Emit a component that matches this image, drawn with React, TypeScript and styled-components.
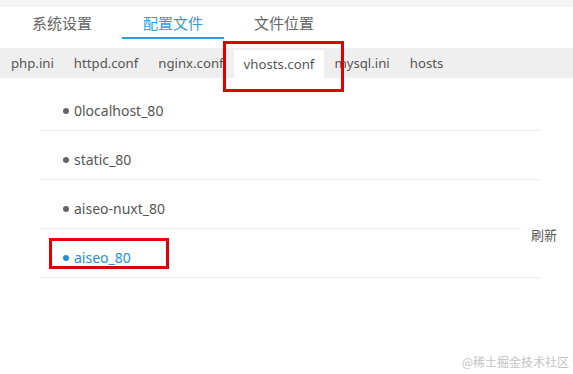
import styled, { createGlobalStyle } from 'styled-components';

const GlobalStyle = createGlobalStyle`
  html, body {
    margin: 0;
    padding: 0;
    background: #fff;
  }
  body {
    font-family: "Noto Sans", "Noto Sans CJK SC", sans-serif;
    color: #555;
  }
`;

const Page = styled.div`
  position: relative;
  width: 573px;
  height: 374px;
  overflow: hidden;
  background: #fff;
`;

const TopStrip = styled.div`
  height: 7px;
  background: #f4f4f4;
`;

const MainTabs = styled.div`
  display: flex;
  gap: 9px;
  padding-left: 11px;
  height: 32px;
`;

const MainTab = styled.div<{ active?: boolean }>`
  width: 102px;
  display: flex;
  align-items: center;
  justify-content: center;
  box-sizing: border-box;
  font-family: "Noto Sans CJK SC", sans-serif;
  font-size: 15px;
  color: ${(p) => (p.active ? '#2aa0d8' : '#666')};
  border-bottom: 2px solid ${(p) => (p.active ? '#2aa0d8' : 'transparent')};
`;

const SubTabs = styled.div`
  display: flex;
  margin-top: 9px;
  height: 30px;
  background: #efefef;
  padding-left: 1px;
`;

const SubTab = styled.div<{ active?: boolean }>`
  display: flex;
  align-items: center;
  padding: 0 10px;
  font-size: 13.2px;
  color: #555;
  background: ${(p) => (p.active ? '#fff' : 'transparent')};
  margin-top: ${(p) => (p.active ? '2px' : '0')};
`;

const List = styled.ul`
  list-style: none;
  margin: 4px 0 0 40px;
  padding: 0;
  width: 500px;
`;

const Row = styled.li<{ active?: boolean }>`
  display: flex;
  align-items: center;
  gap: 5px;
  height: 49px;
  padding: 9px 0 0 23px;
  box-sizing: border-box;
  border-bottom: 1px solid #ececec;
  font-size: 14px;
  color: ${(p) => (p.active ? '#1e8fdc' : '#555')};
`;

const Dot = styled.span<{ active?: boolean }>`
  width: 6px;
  height: 6px;
  border-radius: 50%;
  background: ${(p) => (p.active ? '#1e8fdc' : '#666')};
`;

const Refresh = styled.div`
  position: absolute;
  left: 521px;
  top: 222px;
  width: 52px;
  height: 26px;
  padding-left: 10px;
  box-sizing: border-box;
  background: #fff;
  font-family: "Noto Sans CJK SC", sans-serif;
  font-size: 13px;
  line-height: 26px;
  color: #555;
`;

const Marker = styled.div<{ x: number; y: number; w: number; h: number }>`
  position: absolute;
  left: ${(p) => p.x}px;
  top: ${(p) => p.y}px;
  width: ${(p) => p.w}px;
  height: ${(p) => p.h}px;
  box-sizing: border-box;
  border: 3px solid #e00000;
`;

const Watermark = styled.div`
  position: absolute;
  right: 4px;
  bottom: 4px;
  font-family: "Noto Sans CJK SC", serif;
  font-size: 12px;
  color: #c4c4c4;
`;

const mainTabs = ['系统设置', '配置文件', '文件位置'];
const subTabs = ['php.ini', 'httpd.conf', 'nginx.conf', 'vhosts.conf', 'mysql.ini', 'hosts'];
const hosts = ['0localhost_80', 'static_80', 'aiseo-nuxt_80', 'aiseo_80'];

const App = () => {
  return (
    <Page>
      <GlobalStyle />
      <TopStrip />
      <MainTabs>
        {mainTabs.map((t) => (
          <MainTab key={t} active={t === '配置文件'}>
            {t}
          </MainTab>
        ))}
      </MainTabs>
      <SubTabs>
        {subTabs.map((t) => (
          <SubTab key={t} active={t === 'vhosts.conf'}>
            {t}
          </SubTab>
        ))}
      </SubTabs>
      <List>
        {hosts.map((h) => (
          <Row key={h} active={h === 'aiseo_80'}>
            <Dot active={h === 'aiseo_80'} />
            {h}
          </Row>
        ))}
      </List>
      <Refresh>刷新</Refresh>
      {/* red annotation boxes drawn over the screenshot */}
      <Marker x={223} y={41} w={121} h={51} />
      <Marker x={49} y={238} w={120} h={31} />
      <Watermark>@稀土掘金技术社区</Watermark>
    </Page>
  );
};

export default App;
